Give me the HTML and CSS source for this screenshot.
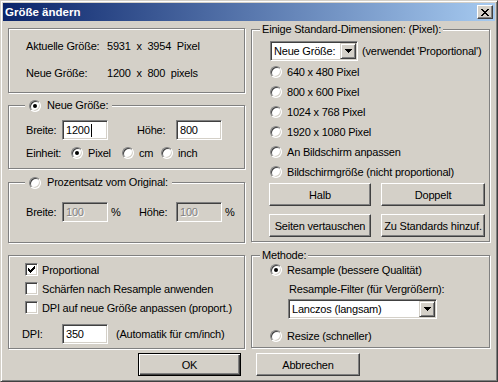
FILE: index.html
```html
<!DOCTYPE html>
<html lang="de">
<head>
  <meta charset="UTF-8">
  <title>Größe ändern</title>
  <link rel="stylesheet" href="styles.css">
</head>
<body>

<div class="window">
  <div class="titlebar">
    <span class="title">Größe ändern</span>
    <span class="close-btn">
      <svg width="8" height="7" viewBox="0 0 8 7" shape-rendering="crispEdges"><path d="M0 0h2v1H0zM6 0h2v1H6zM1 1h2v1H1zM5 1h2v1H5zM2 2h4v1H2zM3 3h2v1H3zM2 4h4v1H2zM1 5h2v1H1zM5 5h2v1H5zM0 6h2v1H0zM6 6h2v1H6z" fill="#000"/></svg>
    </span>
  </div>

  <div class="content">
    <!-- linke Spalte -->
    <div class="col col-left">
      <div class="group g-info">
        <div class="info-row"><span class="info-label">Aktuelle Größe:</span><span class="pre">5931  x  3954  Pixel</span></div>
        <div class="info-row"><span class="info-label">Neue Größe:</span><span class="pre">1200  x  800  pixels</span></div>
      </div>

      <div class="group g-new">
        <div class="legend legend-radio"><span class="radio checked"></span><span>Neue Größe:</span></div>
        <div class="size-row">
          <span class="lbl-w">Breite:</span>
          <span class="field">1200<span class="caret"></span></span>
          <span class="lbl-h">Höhe:</span>
          <span class="field">800</span>
        </div>
        <div class="unit-row">
          <span class="lbl-unit">Einheit:</span>
          <span class="opt opt-px"><span class="radio checked"></span>Pixel</span>
          <span class="opt opt-cm"><span class="radio"></span>cm</span>
          <span class="opt"><span class="radio"></span>inch</span>
        </div>
      </div>

      <div class="group g-pct">
        <div class="legend legend-radio"><span class="radio"></span><span>Prozentsatz vom Original:</span></div>
        <div class="size-row">
          <span class="lbl-w">Breite:</span>
          <span class="field disabled">100</span>
          <span class="pct">%</span>
          <span class="lbl-h2">Höhe:</span>
          <span class="field disabled">100</span>
          <span class="pct2">%</span>
        </div>
      </div>

      <div class="group g-opts">
        <div class="check-row"><span class="check checked"><svg width="7" height="7" viewBox="0 0 7 7" shape-rendering="crispEdges"><path d="M6 0h1v1H6zM5 1h2v1H5zM0 2h1v1H0zM4 2h3v1H4zM0 3h2v1H0zM3 3h3v1H3zM0 4h5v1H0zM1 5h3v1H1zM2 6h1v1H2z" fill="#000"/></svg></span>Proportional</div>
        <div class="check-row"><span class="check"></span>Schärfen nach Resample anwenden</div>
        <div class="check-row"><span class="check"></span>DPI auf neue Größe anpassen (proport.)</div>
        <div class="dpi-row">
          <span class="lbl-dpi">DPI:</span>
          <span class="field">350</span>
          <span class="dpi-note">(Automatik für cm/inch)</span>
        </div>
      </div>
    </div>

    <!-- rechte Spalte -->
    <div class="col col-right">
      <div class="group g-std">
        <div class="legend legend-text">Einige Standard-Dimensionen: (Pixel):</div>
        <div class="combo-row">
          <span class="combo combo-small">
            <span class="combo-text">Neue Größe:</span>
            <span class="drop-btn"><svg width="7" height="4" viewBox="0 0 7 4" shape-rendering="crispEdges"><path d="M0 0h7v1H0zM1 1h5v1H1zM2 2h3v1H2zM3 3h1v1H3z" fill="#000"/></svg></span>
          </span>
          <span>(verwendet 'Proportional')</span>
        </div>
        <div class="std-list">
          <div class="radio-row"><span class="radio"></span>640 x 480 Pixel</div>
          <div class="radio-row"><span class="radio"></span>800 x 600 Pixel</div>
          <div class="radio-row"><span class="radio"></span>1024 x 768 Pixel</div>
          <div class="radio-row"><span class="radio"></span>1920 x 1080 Pixel</div>
          <div class="radio-row"><span class="radio"></span>An Bildschirm anpassen</div>
          <div class="radio-row"><span class="radio"></span>Bildschirmgröße (nicht proportional)</div>
        </div>
        <div class="std-buttons">
          <span class="btn">Halb</span>
          <span class="btn">Doppelt</span>
          <span class="btn">Seiten vertauschen</span>
          <span class="btn">Zu Standards hinzuf.</span>
        </div>
      </div>

      <div class="group g-method">
        <div class="legend legend-text">Methode:</div>
        <div class="radio-row"><span class="radio checked"></span>Resample (bessere Qualität)</div>
        <div class="filter-label">Resample-Filter (für Vergrößern):</div>
        <span class="combo combo-wide">
          <span class="combo-text">Lanczos (langsam)</span>
          <span class="drop-btn"><svg width="7" height="4" viewBox="0 0 7 4" shape-rendering="crispEdges"><path d="M0 0h7v1H0zM1 1h5v1H1zM2 2h3v1H2zM3 3h1v1H3z" fill="#000"/></svg></span>
        </span>
        <div class="radio-row resize-row"><span class="radio"></span>Resize (schneller)</div>
      </div>
    </div>
  </div>

  <div class="actions">
    <span class="btn btn-default btn-ok">OK</span>
    <span class="btn btn-cancel">Abbrechen</span>
  </div>
</div>

</body>
</html>
```

FILE: styles.css
```css
* {
  box-sizing: border-box;
}

body {
  margin: 0;
  font-family: "Liberation Sans", Arial, sans-serif;
  font-size: 11px;
  letter-spacing: -0.2px;
  color: #000;
  background: #D4D0C8;
}

.window {
  width: 498px;
  height: 382px;
  background: #D4D0C8;
  border: 1px solid;
  border-color: #D4D0C8 #404040 #404040 #D4D0C8;
  box-shadow: inset 1px 1px #fff, inset -1px -1px #808080;
  padding: 2px;
  display: flex;
  flex-direction: column;
}

/* Titelleiste */
.titlebar {
  height: 18px;
  background: linear-gradient(to right, #0A246A, #A6CAF0);
  display: flex;
  align-items: center;
  justify-content: space-between;
  padding: 0 2px;
}

.title {
  color: #fff;
  font-weight: bold;
  font-size: 11.5px;
  letter-spacing: 0;
}

.close-btn {
  width: 16px;
  height: 14px;
  display: flex;
  align-items: center;
  justify-content: center;
  background: #D4D0C8;
  border: 1px solid;
  border-color: #fff #404040 #404040 #fff;
  box-shadow: inset -1px -1px #808080;
}

/* Inhalt */
.content {
  display: flex;
  gap: 6px;
  padding: 7px 5px 0 5px;
}

.col {
  display: flex;
  flex-direction: column;
}

.col-left {
  width: 237px;
}

.col-right {
  width: 239px;
  padding-top: 1px;
}

.group {
  position: relative;
  border: 1px solid #808080;
  box-shadow: inset 1px 1px #fff, 1px 1px #fff;
}

.legend {
  position: absolute;
  top: -7px;
  height: 13px;
  line-height: 13px;
  background: #D4D0C8;
  display: flex;
  align-items: center;
  white-space: nowrap;
}

.legend-radio {
  left: 16px;
  padding: 0 4px;
  gap: 6px;
}

.legend-text {
  left: 8px;
  padding: 0 2px;
}

.pre {
  white-space: pre;
}

/* Gruppe: Info */
.g-info {
  height: 65px;
  padding: 11px 0 0 17px;
}

.info-row {
  display: flex;
  height: 13px;
  line-height: 13px;
}

.info-row + .info-row {
  margin-top: 14px;
}

.info-label {
  width: 81px;
}

/* Gruppe: Neue Größe */
.g-new {
  height: 64px;
  margin-top: 12px;
  padding: 14px 0 0 17px;
}

.size-row {
  display: flex;
  align-items: center;
  height: 20px;
}

.lbl-w {
  width: 36px;
}

.lbl-h {
  width: 39px;
  margin-left: 29px;
}

.field {
  width: 46px;
  height: 20px;
  display: flex;
  align-items: center;
  padding-left: 3px;
  background: #fff;
  border: 1px solid;
  border-color: #808080 #fff #fff #808080;
  box-shadow: inset 1px 1px #404040, inset -1px -1px #D4D0C8;
}

.field.disabled {
  background: #D4D0C8;
  color: #808080;
  text-shadow: 1px 1px #fff;
}

.caret {
  display: inline-block;
  width: 1px;
  height: 13px;
  margin-left: 1px;
  background: #000;
}

.unit-row {
  display: flex;
  align-items: center;
  height: 12px;
  margin-top: 7px;
}

.lbl-unit {
  width: 45px;
}

.opt {
  display: flex;
  align-items: center;
  gap: 5px;
}

.opt-px {
  width: 51px;
}

.opt-cm {
  width: 39px;
}

/* Radios und Checkboxen */
.radio {
  position: relative;
  flex: none;
  width: 12px;
  height: 12px;
  border-radius: 50%;
  background: #fff;
  border: 1px solid;
  border-color: #808080 #fff #fff #808080;
  box-shadow: inset 1px 1px #404040, inset -1px -1px #D4D0C8;
}

.radio.checked::after {
  content: "";
  position: absolute;
  left: 3px;
  top: 3px;
  width: 4px;
  height: 4px;
  border-radius: 50%;
  background: #000;
}

.check {
  flex: none;
  width: 13px;
  height: 13px;
  display: flex;
  align-items: center;
  justify-content: center;
  background: #fff;
  border: 1px solid;
  border-color: #808080 #fff #fff #808080;
  box-shadow: inset 1px 1px #404040, inset -1px -1px #D4D0C8;
}

/* Gruppe: Prozent */
.g-pct {
  height: 61px;
  margin-top: 13px;
  padding: 19px 0 0 17px;
}

.pct {
  width: 31px;
  padding-left: 3px;
}

.lbl-h2 {
  width: 37px;
}

.pct2 {
  padding-left: 3px;
}

/* Gruppe: Optionen */
.g-opts {
  height: 94px;
  margin-top: 12px;
  padding: 4px 0 0 13px;
}

.check-row {
  display: flex;
  align-items: center;
  gap: 4px;
  height: 19px;
  padding-left: 3px;
}

.dpi-row {
  display: flex;
  align-items: center;
  height: 20px;
  margin-top: 7px;
}

.lbl-dpi {
  width: 40px;
}

.dpi-note {
  margin-left: 8px;
}

/* Gruppe: Standard-Dimensionen */
.g-std {
  height: 213px;
  padding: 11px 0 0 18px;
}

.combo-row {
  display: flex;
  align-items: center;
  gap: 4px;
  height: 20px;
}

.combo {
  height: 20px;
  display: flex;
  align-items: stretch;
  background: #fff;
  border: 1px solid;
  border-color: #808080 #fff #fff #808080;
  box-shadow: inset 1px 1px #404040, inset -1px -1px #D4D0C8;
  padding: 1px;
}

.combo-small {
  width: 88px;
}

.combo-wide {
  width: 149px;
  margin: 3px 0 0 18px;
}

.combo-text {
  flex: 1;
  display: flex;
  align-items: center;
  padding-left: 2px;
  white-space: nowrap;
}

.drop-btn {
  width: 16px;
  display: flex;
  align-items: center;
  justify-content: center;
  background: #D4D0C8;
  border: 1px solid;
  border-color: #D4D0C8 #404040 #404040 #D4D0C8;
  box-shadow: inset 1px 1px #fff, inset -1px -1px #808080;
}

.std-list {
  margin-top: 1px;
}

.radio-row {
  display: flex;
  align-items: center;
  gap: 5px;
  height: 20px;
}

.std-buttons {
  display: grid;
  grid-template-columns: 102px 104px;
  column-gap: 10px;
  row-gap: 8px;
  margin: 1px 0 0 -1px;
}

.btn {
  height: 23px;
  display: flex;
  align-items: center;
  justify-content: center;
  background: #D4D0C8;
  border: 1px solid;
  border-color: #fff #404040 #404040 #fff;
  box-shadow: inset -1px -1px #808080, inset 1px 1px #D4D0C8;
  white-space: nowrap;
}

/* Gruppe: Methode */
.g-method {
  height: 93px;
  margin-top: 13px;
  padding: 4px 0 0 18px;
}

.filter-label {
  height: 13px;
  line-height: 13px;
  margin: 3px 0 0 19px;
}

.resize-row {
  margin-top: 7px;
}

/* Schaltflächen unten */
.actions {
  display: flex;
  justify-content: center;
  gap: 15px;
  margin-top: 4px;
}

.btn-ok {
  width: 103px;
}

.btn-cancel {
  width: 104px;
}

.btn-default {
  border-color: #000;
  box-shadow: inset 1px 1px #fff, inset -1px -1px #404040, inset -2px -2px #808080;
}
```
